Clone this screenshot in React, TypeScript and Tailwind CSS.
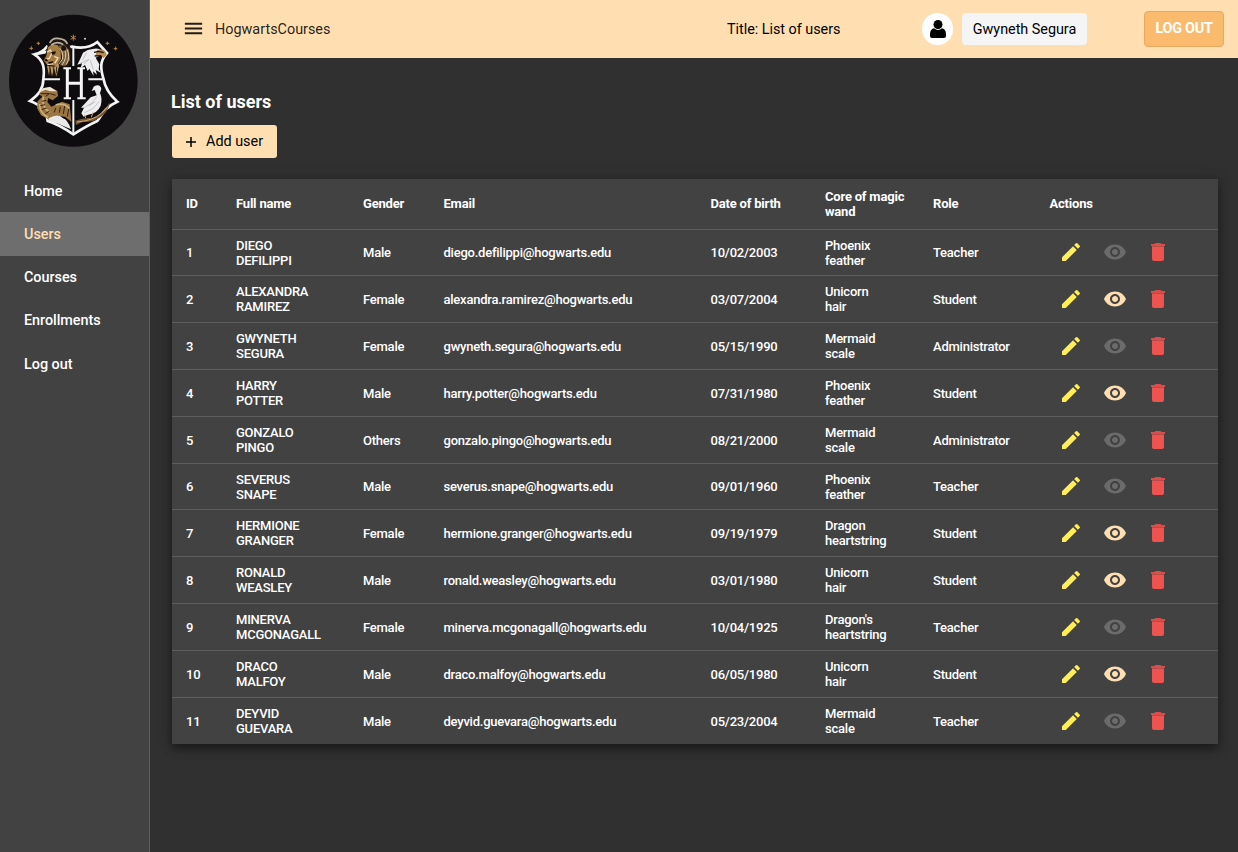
import React from "react";
import { MdEdit, MdMenu, MdVisibility } from "react-icons/md";

type User = { id: number; first: string; last: string; gender: string; email: string; birth: string; core: [string, string]; role: string; h: string };

const users: User[] = [
  { id: 1, first: "DIEGO", last: "DEFILIPPI", gender: "Male", email: "diego.defilippi@hogwarts.edu", birth: "10/02/2003", core: ["Phoenix", "feather"], role: "Teacher", h: "h-[46px]" },
  { id: 2, first: "ALEXANDRA", last: "RAMIREZ", gender: "Female", email: "alexandra.ramirez@hogwarts.edu", birth: "03/07/2004", core: ["Unicorn", "hair"], role: "Student", h: "h-[47px]" },
  { id: 3, first: "GWYNETH", last: "SEGURA", gender: "Female", email: "gwyneth.segura@hogwarts.edu", birth: "05/15/1990", core: ["Mermaid", "scale"], role: "Administrator", h: "h-[47px]" },
  { id: 4, first: "HARRY", last: "POTTER", gender: "Male", email: "harry.potter@hogwarts.edu", birth: "07/31/1980", core: ["Phoenix", "feather"], role: "Student", h: "h-[47px]" },
  { id: 5, first: "GONZALO", last: "PINGO", gender: "Others", email: "gonzalo.pingo@hogwarts.edu", birth: "08/21/2000", core: ["Mermaid", "scale"], role: "Administrator", h: "h-[47px]" },
  { id: 6, first: "SEVERUS", last: "SNAPE", gender: "Male", email: "severus.snape@hogwarts.edu", birth: "09/01/1960", core: ["Phoenix", "feather"], role: "Teacher", h: "h-[46px]" },
  { id: 7, first: "HERMIONE", last: "GRANGER", gender: "Female", email: "hermione.granger@hogwarts.edu", birth: "09/19/1979", core: ["Dragon", "heartstring"], role: "Student", h: "h-[47px]" },
  { id: 8, first: "RONALD", last: "WEASLEY", gender: "Male", email: "ronald.weasley@hogwarts.edu", birth: "03/01/1980", core: ["Unicorn", "hair"], role: "Student", h: "h-[47px]" },
  { id: 9, first: "MINERVA", last: "MCGONAGALL", gender: "Female", email: "minerva.mcgonagall@hogwarts.edu", birth: "10/04/1925", core: ["Dragon's", "heartstring"], role: "Teacher", h: "h-[47px]" },
  { id: 10, first: "DRACO", last: "MALFOY", gender: "Male", email: "draco.malfoy@hogwarts.edu", birth: "06/05/1980", core: ["Unicorn", "hair"], role: "Student", h: "h-[47px]" },
  { id: 11, first: "DEYVID", last: "GUEVARA", gender: "Male", email: "deyvid.guevara@hogwarts.edu", birth: "05/23/2004", core: ["Mermaid", "scale"], role: "Teacher", h: "h-[46px]" },
];

const columns = "grid grid-cols-[50px_127px_80.5px_267px_114.5px_108px_116.5px_1fr] items-center pl-[14px]";

function TrashIcon() {
  return (
    <svg viewBox="0 0 24 24" className="size-6">
      <path d="M6 7H18V19Q18 21 16 21H8Q6 21 6 19Z" fill="#ef5350" />
      <path d="M5 4H8.5L9.5 3H14.5L15.5 4H19V6H5Z" fill="#d94e4b" />
      <path d="M6 6H18V7H6Z" fill="#b94a48" />
    </svg>
  );
}

function Crest() {
  return (
    <svg viewBox="0 0 450 480" className="h-[160px] w-[150px] shrink-0">
      <ellipse cx="220" cy="242" rx="193" ry="198" fill="#0e0c0e" />
      <path d="M103 163Q128 158 143 137M216 140Q262 150 292 126L321 159C298 184 302 208 310 235C315 265 332 288 352 305C312 322 303 350 292 363Q261 377 220 403Q178 374 143 363C138 330 122 315 90 303C113 288 130 264 130 238C134 207 133 182 103 163Z" fill="none" stroke="#f4f4f5" strokeWidth="8" />
      <path d="M220 140V198M220 300V398M132 238H180M265 238H308" stroke="#f4f4f5" strokeWidth="6" />
      <g>
        <path d="M143 137L148 120L166 110L184 112L203 123L213 146L214 188L201 203L178 199L174 231L142 226L141 194L130 182L137 162Z" fill="#211711" />
        <path d="M144 142L157 132L174 136L182 152L183 177L168 198L140 193L131 181L139 168Z" fill="#a67d43" />
        <path d="M176 137L194 136L207 150L210 180L196 198L180 196L188 174Z" fill="#79603f" />
        <path d="M149 129Q158 111 178 116Q197 118 202 132M154 135Q171 121 190 134" fill="none" stroke="#b8b0a2" strokeWidth="5" />
        <path d="M179 145Q192 157 187 178L176 193M190 143Q203 160 193 184L186 195M201 148Q212 169 199 194" fill="none" stroke="#dfcba7" strokeWidth="3" />
        <path d="M184 139Q199 132 198 149Q190 156 184 149" fill="#1c1511" />
        <path d="M142 157L151 150L156 159L148 175L137 179M163 169L174 174L164 190M142 194L159 191" fill="none" stroke="#f3dfb8" strokeWidth="4" />
        <path d="M153 156L168 154L165 163L157 164ZM133 178L141 177L144 184L136 184ZM144 187L160 183L157 190L146 191Z" fill="#191111" />
        <path d="M141 198L147 226L151 201L156 229L162 203L169 229L177 199L174 188L165 200Z" fill="#c09a61" />
        <path d="M149 199L151 219M159 198L162 220M170 200L169 220" stroke="#34261a" strokeWidth="3" />
      </g>
      <g>
        <path d="M232 194L242 174L249 158Q263 148 278 147Q295 143 304 151L302 165L287 173L298 193L296 207L302 218L287 210L291 224L279 214L281 228L268 206L263 213L255 195L242 205L246 190Z" fill="#eeeef0" />
        <path d="M291 150Q316 144 320 165L311 174L300 165L286 168Z" fill="#b78c4c" />
        <path d="M282 157L296 154L311 158M284 168L304 167" fill="none" stroke="#17120f" strokeWidth="4" />
        <path d="M240 190L267 178L251 193M271 181L280 209M260 158L248 180" fill="none" stroke="#aaaab0" strokeWidth="2" />
      </g>
      <g>
        <path d="M117 283L128 265L149 260L172 273L174 288L158 301L145 294L142 306L154 320L186 305L209 313L214 365L195 350L173 347L148 359L123 346L111 324L113 304L127 290Z" fill="#9c7642" />
        <path d="M120 277L129 265L150 261L171 274L151 274L136 269Z" fill="#eee6d5" />
        <path d="M119 312Q119 340 144 352M130 290Q123 321 150 337M167 315Q190 307 208 325" fill="none" stroke="#ccb07c" strokeWidth="5" />
        <path d="M122 281H148L137 289M151 281L167 286M126 304L139 301M121 317L135 314M125 329L140 324M136 341L149 333M167 324L163 337M181 321L178 338M194 318L190 342M206 327L202 350" fill="none" stroke="#302113" strokeWidth="3" />
        <path d="M146 355Q176 338 189 355Q202 357 213 388Q180 371 146 362Z" fill="#e9e9ea" />
      </g>
      <g>
        <path d="M281 260Q300 249 304 267L300 279Q308 297 302 317Q292 341 264 344L251 350L244 340L252 323L243 323L259 306L272 292L290 286L284 270L275 273Z" fill="#eeeef0" />
        <path d="M290 290L276 309L254 322M297 305L280 325L254 338M286 305L266 318" fill="none" stroke="#b0b0b6" strokeWidth="2" />
        <path d="M226 362Q254 352 275 355Q309 343 329 307Q328 332 302 351Q277 369 249 365L228 375Z" fill="#755633" />
        <path d="M231 366Q279 362 304 340Q316 331 324 319M254 344L257 354M279 337L274 352" fill="none" stroke="#d2aa71" strokeWidth="3" />
      </g>
      <path d="M190 205H213M232 205H255M191 295H213M232 295H257" fill="none" stroke="#f5f5f6" strokeWidth="6" />
      <path d="M202 206V294M244 206V294M202 250H244" fill="none" stroke="#f5f5f6" strokeWidth="9" />
      <g stroke="#b7873d" strokeWidth="3">
        <path d="M220 104V122M212 108L228 118M228 108L212 118M94 139V150M88 145H99M115 125V135M110 130H120M322 125V135M317 130H328M347 140V151M341 146H352" />
      </g>
      <circle cx="255" cy="116" r="3" fill="#d8d8da" />
    </svg>
  );
}

function App() {
  const nav = [
    { label: "Home", row: "h-[42px] pt-0.5 text-white" },
    { label: "Users", row: "h-[44px] pt-px bg-[#6e6e6e] text-[#ffdfb1]" },
    { label: "Courses", row: "h-[43px] text-white" },
    { label: "Enrollments", row: "h-[43px] text-white" },
    { label: "Log out", row: "h-[44px] pt-0.5 text-white" },
  ];
  return (
    <div className="flex h-[852px] w-[1238px] overflow-hidden bg-[#303030] font-[Roboto,sans-serif] text-white">
      <aside className="flex w-[150px] shrink-0 flex-col border-r border-[#5e5e5e] bg-[#424242]">
        <div className="h-[170px] w-[149px] overflow-hidden"><Crest /></div>
        <nav className="flex flex-col text-[14.4px] font-medium tracking-[-0.03px]">
          {nav.map((n) => (
            <a key={n.label} className={`flex items-center pl-6 ${n.row}`}>{n.label}</a>
          ))}
        </nav>
      </aside>
      <div className="flex min-w-0 flex-1 flex-col">
        <header className="flex h-[58px] shrink-0 items-center bg-[#ffdfb1] text-[14.4px] text-black/87">
          <MdMenu className="-mt-0.5 ml-8 size-[23px]" />
          <span className="ml-[10px] w-[512px] pt-px">HogwartsCourses</span>
          <span className="w-[195px] pt-px tracking-[-0.03px] text-black">Title: List of users</span>
          <span className="flex h-8 w-[31px] items-center justify-center rounded-full bg-white">
            <svg viewBox="0 0 16 18" className="h-[18px] w-4 fill-black">
              <circle cx="8" cy="4.5" r="4.5" />
              <path d="M4 8.3Q8 11.5 12 8.3Q16 9.5 16 14V16Q16 18 14 18H2Q0 18 0 16V14Q0 9.5 4 8.3Z" />
            </svg>
          </span>
          <span className="ml-[9px] flex h-8 w-[125px] items-center justify-center rounded-[4px] bg-[#f5f5f5] pt-px tracking-[-0.03px] text-black">Gwyneth Segura</span>
          <button className="ml-[57px] flex h-9 w-20 items-center justify-center rounded-[4px] border border-[#e9a85e] bg-[#fbbb6e] text-[14.4px] font-bold tracking-[-0.25px] text-white">LOG OUT</button>
        </header>
        <main className="flex flex-col pl-[22px]">
          <h1 className="-ml-px mt-8 h-6 text-[18px] leading-6 font-bold">List of users</h1>
          <button className="mt-[11px] flex h-[33px] w-[105px] items-center rounded-[3px] bg-[#ffdfb1] pl-[14px] text-[14.4px] text-black">
            <svg viewBox="0 0 10 10" className="mr-[10px] size-[10px]">
              <path d="M5 0V10M0 5H10" stroke="black" strokeWidth="1.5" />
            </svg>
            Add user
          </button>
          <section className="mt-[21px] w-[1046px] bg-[#424242] text-[13px] leading-[15px] shadow-[0_5px_8px_rgba(0,0,0,0.35),0_2px_14px_rgba(0,0,0,0.2)]">
            <div className={`${columns} h-[51px] border-b border-[#5e5e5e] pb-px font-bold tracking-[-0.2px]`}>
              <span>ID</span><span>Full name</span><span>Gender</span><span>Email</span><span>Date of birth</span><span>Core of magic<br />wand</span><span>Role</span><span>Actions</span>
            </div>
            {users.map((u) => (
              <div key={u.id} className={`${columns} ${u.h} border-b border-[#5e5e5e] font-medium tracking-[-0.23px] last:border-b-0`}>
                <span>{u.id}</span>
                <span>{u.first}<br />{u.last}</span>
                <span>{u.gender}</span>
                <span>{u.email}</span>
                <span>{u.birth}</span>
                <span>{u.core[0]}<br />{u.core[1]}</span>
                <span>{u.role}</span>
                <span className="flex gap-[19.5px] pb-px pl-[9.5px]">
                  <MdEdit className="size-6 text-[#ffee58]" />
                  <MdVisibility className={`size-6 ${u.role === "Student" ? "text-[#ffdfb1]" : "text-[#6b6b6b]"}`} />
                  <TrashIcon />
                </span>
              </div>
            ))}
          </section>
        </main>
      </div>
    </div>
  );
}

export default App;
